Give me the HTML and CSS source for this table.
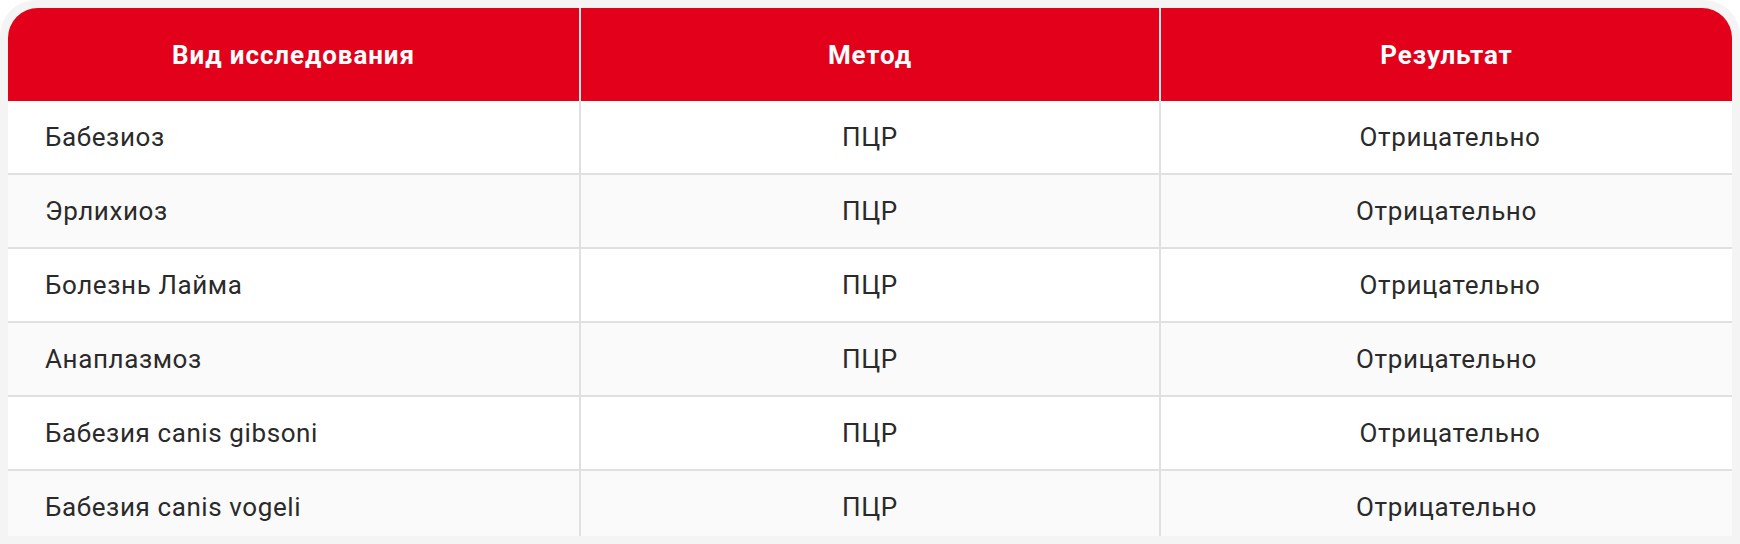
FILE: index.html
```html
<!DOCTYPE html>
<html lang="ru">
<head>
<meta charset="utf-8">
<link rel="stylesheet" href="styles.css">
</head>
<body>
<div class="frame">
  <div class="scroll">
    <table class="results">
      <colgroup>
        <col class="c1"><col class="c2"><col class="c3">
      </colgroup>
      <thead>
        <tr><th>Вид исследования</th><th>Метод</th><th>Результат</th></tr>
      </thead>
      <tbody>
        <tr><td class="name">Бабезиоз</td><td>ПЦР</td><td>&nbsp;Отрицательно</td></tr>
        <tr><td class="name">Эрлихиоз</td><td>ПЦР</td><td>Отрицательно</td></tr>
        <tr><td class="name">Болезнь Лайма</td><td>ПЦР</td><td>&nbsp;Отрицательно</td></tr>
        <tr><td class="name">Анаплазмоз</td><td>ПЦР</td><td>Отрицательно</td></tr>
        <tr><td class="name">Бабезия canis gibsoni</td><td>ПЦР</td><td>&nbsp;Отрицательно</td></tr>
        <tr><td class="name">Бабезия canis vogeli</td><td>ПЦР</td><td>Отрицательно</td></tr>
      </tbody>
    </table>
  </div>
</div>
</body>
</html>
```

FILE: styles.css
```css
html, body {
  margin: 0;
  padding: 0;
  background: #ffffff;
}
body {
  width: 1740px;
  height: 544px;
  overflow: hidden;
  font-family: Roboto, "Noto Sans", sans-serif;
}
.frame {
  box-sizing: border-box;
  width: 1740px;
  height: 544px;
  padding: 8px;
  background: #f4f4f4;
  border-radius: 36px 36px 0 0;
}
.scroll {
  height: 528px;
  overflow: hidden;
  border-radius: 30px 30px 0 0;
}
.results {
  width: 100%;
  border-collapse: collapse;
  table-layout: fixed;
}
.c1 { width: 572px; }
.c3 { width: 572px; }
.results th {
  height: 93px;
  padding: 0;
  background: #e2001a;
  color: #ffffff;
  font-size: 26px;
  font-weight: 700;
  letter-spacing: 0.9px;
  text-align: center;
  vertical-align: middle;
  border-left: 2px solid #e6e6e6;
}
.results th:first-child { border-left: none; }
.results td {
  height: 72px;
  padding: 0;
  font-size: 26px;
  font-weight: 400;
  letter-spacing: 0.6px;
  color: #2a2a2a;
  text-align: center;
  vertical-align: middle;
  border-left: 2px solid #e0e0e0;
  border-bottom: 2px solid #e0e0e0;
  background: #ffffff;
}
.results td:first-child { border-left: none; }
.results tbody tr:nth-child(even) td { background: #fafafa; }
.results td.name {
  text-align: left;
  padding-left: 37px;
}
```
